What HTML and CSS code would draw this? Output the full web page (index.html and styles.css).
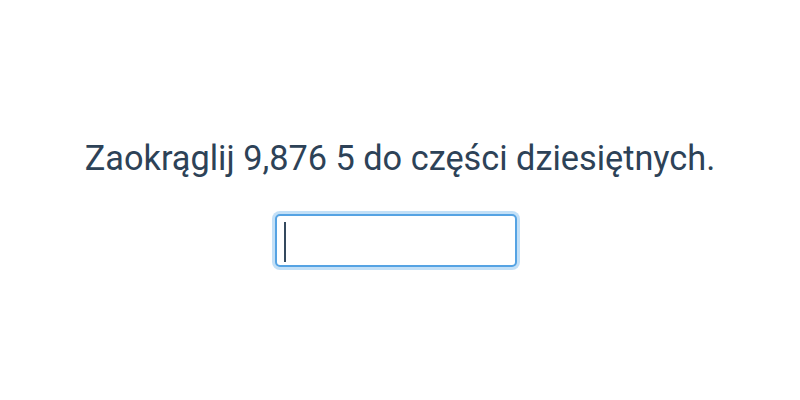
FILE: index.html
```html
<!DOCTYPE html>
<html lang="pl">
<head>
  <meta charset="UTF-8">
  <title>Zaokrąglanie</title>
  <link rel="stylesheet" href="styles.css">
</head>
<body>
  <div class="question">
    <p class="prompt">Zaokrąglij 9,876 5 do części dziesiętnych.</p>
    <div class="answer-wrap">
      <input class="answer" type="text" autofocus>
      <span class="caret"></span>
    </div>
  </div>
</body>
</html>
```

FILE: styles.css
```css
html, body {
  height: 100%;
}

body {
  margin: 0;
  font-family: Roboto, "Liberation Sans", sans-serif;
  color: #2d4257;
  background: #fff;
}

.question {
  box-sizing: border-box;
  height: 100%;
  padding-top: 4px;
  display: flex;
  flex-direction: column;
  align-items: center;
  justify-content: center;
  gap: 36px;
}

.prompt {
  margin: 0;
  font-size: 34.3px;
  line-height: 40px;
}

.answer-wrap {
  position: relative;
  margin-right: 9px;
}

.answer {
  display: block;
  box-sizing: border-box;
  width: 242px;
  height: 53px;
  padding: 0 8px;
  border: 2px solid #55a3e3;
  border-radius: 5px;
  font-family: inherit;
  font-size: 34px;
  color: #2d4257;
  caret-color: transparent;
  outline: none;
  box-shadow: 0 0 0 3px #c3e0f7;
}

.caret {
  position: absolute;
  left: 9px;
  top: 8px;
  width: 2px;
  height: 40px;
  background: #34495e;
}
```
